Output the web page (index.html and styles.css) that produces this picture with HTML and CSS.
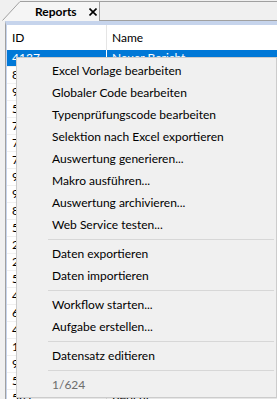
FILE: index.html
```html
<!DOCTYPE html>
<html lang="de">
<head>
    <meta charset="UTF-8">
    <title>Reports</title>
    <link rel="stylesheet" href="styles.css">
</head>
<body>
    <div class="tabs">
        <svg class="tab-slant" width="18" height="21" viewBox="0 0 18 21">
            <polygon points="0,21 18,1 18,21" fill="#f5f5f5"/>
            <line x1="0.5" y1="20.5" x2="18" y2="1.5" stroke="#a0a0a0" stroke-width="1"/>
        </svg>
        <div class="tab">
            <span class="tab-title">Reports</span>
            <svg class="tab-close" width="8" height="8" viewBox="0 0 8 8">
                <path d="M0.5 0.5 L7.5 7.5 M7.5 0.5 L0.5 7.5" stroke="#000" stroke-width="1.6" fill="none"/>
            </svg>
        </div>
        <div class="tab-rest"></div>
    </div>

    <div class="panel">
        <div class="grid">
            <div class="grid-head">
                <div class="col-id">ID</div>
                <div class="col-name">Name</div>
            </div>
            <div class="row selected"><div class="col-id">4137</div><div class="col-name">Neuer Bericht</div></div>
            <div class="row"><div class="col-id">812</div><div class="col-name">Bericht</div></div>
            <div class="row"><div class="col-id">934</div><div class="col-name">Bericht</div></div>
            <div class="row"><div class="col-id">566</div><div class="col-name">Bericht</div></div>
            <div class="row"><div class="col-id">702</div><div class="col-name">Bericht</div></div>
            <div class="row"><div class="col-id">718</div><div class="col-name">Bericht</div></div>
            <div class="row"><div class="col-id">731</div><div class="col-name">Bericht</div></div>
            <div class="row"><div class="col-id">921</div><div class="col-name">Bericht</div></div>
            <div class="row"><div class="col-id">945</div><div class="col-name">Bericht</div></div>
            <div class="row"><div class="col-id">803</div><div class="col-name">Bericht</div></div>
            <div class="row"><div class="col-id">554</div><div class="col-name">Bericht</div></div>
            <div class="row"><div class="col-id">210</div><div class="col-name">Bericht</div></div>
            <div class="row"><div class="col-id">233</div><div class="col-name">Bericht</div></div>
            <div class="row"><div class="col-id">501</div><div class="col-name">Bericht</div></div>
            <div class="row"><div class="col-id">467</div><div class="col-name">Bericht</div></div>
            <div class="row"><div class="col-id">612</div><div class="col-name">Bericht</div></div>
            <div class="row"><div class="col-id">440</div><div class="col-name">Bericht</div></div>
            <div class="row"><div class="col-id">112</div><div class="col-name">Bericht</div></div>
            <div class="row"><div class="col-id">987</div><div class="col-name">Bericht</div></div>
            <div class="row"><div class="col-id">523</div><div class="col-name">Bericht</div></div>
            <div class="row"><div class="col-id">581</div><div class="col-name">Bericht</div></div>
        </div>
    </div>

    <ul class="context-menu">
        <li class="item">Excel Vorlage bearbeiten</li>
        <li class="item">Globaler Code bearbeiten</li>
        <li class="item">Typenprüfungscode bearbeiten</li>
        <li class="item">Selektion nach Excel exportieren</li>
        <li class="item">Auswertung generieren...</li>
        <li class="item">Makro ausführen...</li>
        <li class="item">Auswertung archivieren...</li>
        <li class="item">Web Service testen...</li>
        <li class="sep"></li>
        <li class="item">Daten exportieren</li>
        <li class="item">Daten importieren</li>
        <li class="sep"></li>
        <li class="item">Workflow starten...</li>
        <li class="item">Aufgabe erstellen...</li>
        <li class="sep"></li>
        <li class="item">Datensatz editieren</li>
        <li class="sep"></li>
        <li class="item disabled">1/624</li>
    </ul>
</body>
</html>
```

FILE: styles.css
```css
:root {
    --window-bg: #f0f0f0;
    --border: #a0a0a0;
    --band: #c6d4ec;
    --select: #0078d7;
    --menu-bg: #f0f0f0;
    --menu-border: #cccccc;
    --sep: #d7d7d7;
}

* {
    margin: 0;
    padding: 0;
    box-sizing: border-box;
}

body {
    font-family: Lato, 'Liberation Sans', sans-serif;
    font-size: 12px;
    color: #000;
    background-color: var(--window-bg);
    height: 399px;
    overflow: hidden;
}

/* Tab strip */
.tabs {
    display: flex;
    height: 21px;
    padding-left: 2px;
}

.tab-slant {
    display: block;
    flex: none;
}

.tab {
    width: 80px;
    margin-top: 1px;
    border-top: 1px solid var(--border);
    border-right: 1px solid var(--border);
    background-color: #f5f5f5;
    display: flex;
    align-items: center;
    padding-left: 15px;
}

.tab-title {
    font-weight: 700;
    line-height: 18px;
}

.tab-close {
    display: block;
    margin-left: 12px;
    margin-top: 1px;
}

.tab-rest {
    flex: 1;
    margin-top: 1px;
    border-top: 1px solid var(--border);
    border-bottom: 1px solid var(--border);
}

/* Panel with list */
.panel {
    height: 378px;
    margin-left: 5px;
    border-left: 1px solid var(--border);
    border-top: 4px solid var(--band);
    overflow: hidden;
}

.grid {
    height: 100%;
    background-color: #fff;
    border-left: 1px solid var(--band);
    overflow: hidden;
}

.grid-head,
.row {
    display: flex;
}

.grid-head {
    height: 25px;
    align-items: center;
}

.col-id {
    width: 100px;
    padding-left: 5px;
    border-right: 1px solid #e5e5e5;
    white-space: nowrap;
}

.col-name {
    padding-left: 5px;
    white-space: nowrap;
}

.grid-head .col-id,
.grid-head .col-name {
    line-height: 25px;
}

.row {
    height: 17px;
    line-height: 16px;
    border-bottom: 1px solid #f0f0f0;
}

.row.selected {
    background-color: var(--select);
    color: #fff;
}

.row.selected .col-id {
    border-right-color: #fff;
}

/* Context menu */
.context-menu {
    position: absolute;
    left: 16px;
    top: 57px;
    width: 261px;
    list-style: none;
    background-color: var(--menu-bg);
    border: 1px solid var(--menu-border);
    padding: 2px 0 1px;
    box-shadow: 1px 1px 2px rgba(0, 0, 0, 0.15);
}

.context-menu .item {
    height: 22px;
    line-height: 22px;
    padding-left: 35px;
    white-space: nowrap;
}

.context-menu .item.disabled {
    color: #6d6d6d;
}

.context-menu .sep {
    height: 7px;
    margin: 0 2px 0 31px;
    display: flex;
    align-items: center;
}

.context-menu .sep::before {
    content: "";
    flex: 1;
    height: 1px;
    background-color: var(--sep);
}
```
